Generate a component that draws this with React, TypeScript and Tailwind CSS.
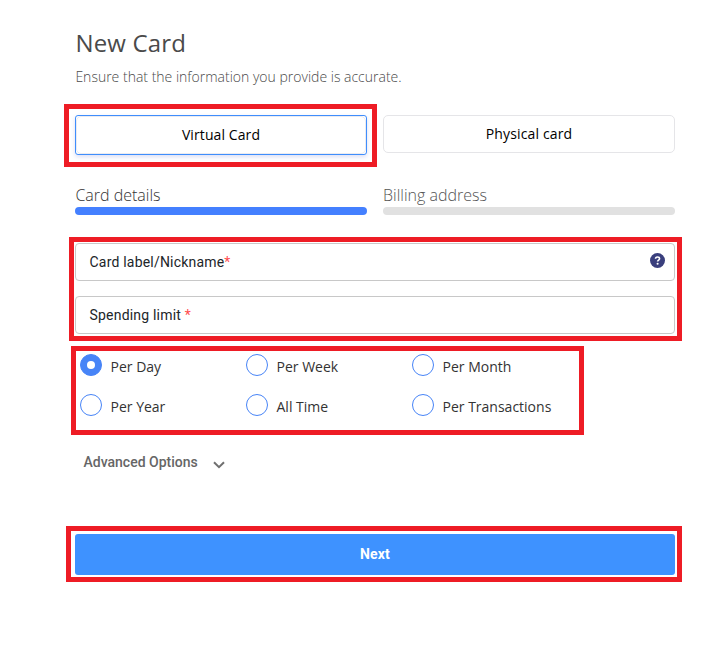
import { ReactNode } from 'react';

const sans = "font-['Open_Sans',sans-serif]";
const roboto = 'font-[Roboto,sans-serif]';

function Highlight({ className }: { className: string }) {
  return <div className={`pointer-events-none absolute border-[5px] border-[#ee1c25] ${className}`} />;
}

function Step({ label, color, bar }: { label: string; color: string; bar: string }) {
  return (
    <div className="w-[292px]">
      <div className={`h-[23px] text-[16px] leading-[23px] font-light ${color}`}>{label}</div>
      <div className={`h-2 rounded-full ${bar}`} />
    </div>
  );
}

function Field({ label, children }: { label: string; children?: ReactNode }) {
  return (
    <div className={`flex h-[38px] items-center justify-between rounded-[4px] border border-[#c8c8c8] pr-[9px] pl-[13.5px] text-[14px] text-[#212529] ${roboto}`}>
      <span className="tracking-[0.2px]">
        {label}
        <span className="text-[#ff4d4f]">*</span>
      </span>
      {children}
    </div>
  );
}

function Radio({ label, checked }: { label: string; checked?: boolean }) {
  return (
    <label className="flex h-[22px] items-center gap-[8.5px]">
      <span className={`flex size-[22px] shrink-0 items-center justify-center rounded-full border border-[#4784f7] ${checked ? 'bg-[#4784f7]' : 'bg-white'}`}>
        {checked && <span className="size-2 rounded-full bg-white" />}
      </span>
      <span className="pt-[3px] text-[14px] leading-[20px] whitespace-nowrap text-[#333]">{label}</span>
    </label>
  );
}

const periods = ['Per Day', 'Per Week', 'Per Month', 'Per Year', 'All Time', 'Per Transactions'];

export default function App() {
  return (
    <div className={`h-[652px] w-[722px] overflow-hidden bg-white pt-[26px] pl-[75px] ${sans}`}>
      <div className="flex w-[600px] flex-col">
        <h1 className="h-[34px] pl-[0.5px] text-[24px] leading-[34px] tracking-[0.16px] text-[#4a4a4a]">New Card</h1>
        <p className="mt-[7px] h-[20px] pl-[0.4px] text-[14px] leading-[20px] font-light text-[#4a4a4a]">
          Ensure that the information you provide is accurate.
        </p>

        <div className="mt-[28px] flex h-[40px] items-start gap-4 text-[14px] text-black">
          <div className="relative w-[292px]">
            <button className="h-[40px] w-full rounded-[3px] border border-[#3f8efc] bg-white shadow-[0_2px_4px_rgba(60,80,200,0.18)]">
              <span className="flex h-full items-center justify-center rounded-[5px] border border-[#ebebf0] pb-[2px] tracking-[0.1px]">Virtual Card</span>
            </button>
            <Highlight className="-top-[11px] -right-[10px] -bottom-[12px] -left-[11px]" />
          </div>
          <button className="h-[38px] w-[292px] rounded-[5px] border border-[#e5e5e8] bg-white pb-[2px] tracking-[0.15px]">Physical card</button>
        </div>

        <div className="mt-[29px] flex gap-4">
          <Step label="Card details" color="text-[#333] pl-[0.4px]" bar="bg-[#4480ff]" />
          <Step label="Billing address" color="text-[#555]" bar="bg-[#e1e1e1]" />
        </div>

        <div className="relative mt-[28px] flex flex-col gap-[15px]">
          <Field label="Card label/Nickname">
            <svg className="mb-[3px] size-[15px]" viewBox="0 0 16 16">
              <circle cx="8" cy="8" r="8" fill="#3a3f7d" />
              <path d="M5.9 6.2C5.9 4.8 6.8 4.2 8 4.2s2.2.7 2.2 1.8c0 1.5-2.1 1.5-2.1 3.1" fill="none" stroke="#fff" strokeWidth="1.7" />
              <circle cx="8.1" cy="11.4" r="1.1" fill="#fff" />
            </svg>
          </Field>
          <Field label="Spending limit " />
          <Highlight className="-top-[6px] -right-[7px] -bottom-[7px] -left-[6px]" />
        </div>

        <div className="relative mt-[20px] grid grid-cols-[166px_166px_166px] gap-y-[18px] pl-[5px]">
          {periods.map((p, i) => (
            <Radio key={p} label={p} checked={i === 0} />
          ))}
          <Highlight className="-top-[8px] -bottom-[19px] -left-[4px] w-[513px]" />
        </div>

        <div className={`mt-[36px] flex h-[20px] items-center pl-[8.5px] text-[14px] font-medium text-[#666] ${roboto}`}>
          <span>Advanced Options</span>
          <svg className="mt-[6px] ml-[15.5px] h-[8px] w-[12px]" viewBox="0 0 12 8" fill="none" stroke="#707070" strokeWidth="2">
            <path d="M1 1.2 6 6.2 11 1.2" />
          </svg>
        </div>

        <div className="relative mt-[62px]">
          <button className={`block h-[41px] w-full rounded-[3px] bg-[#3e92ff] text-[14px] font-bold tracking-[0.15px] text-white ${roboto}`}>Next</button>
          <Highlight className="-top-[8px] -right-[7px] -bottom-[7px] -left-[9px]" />
        </div>
      </div>
    </div>
  );
}
